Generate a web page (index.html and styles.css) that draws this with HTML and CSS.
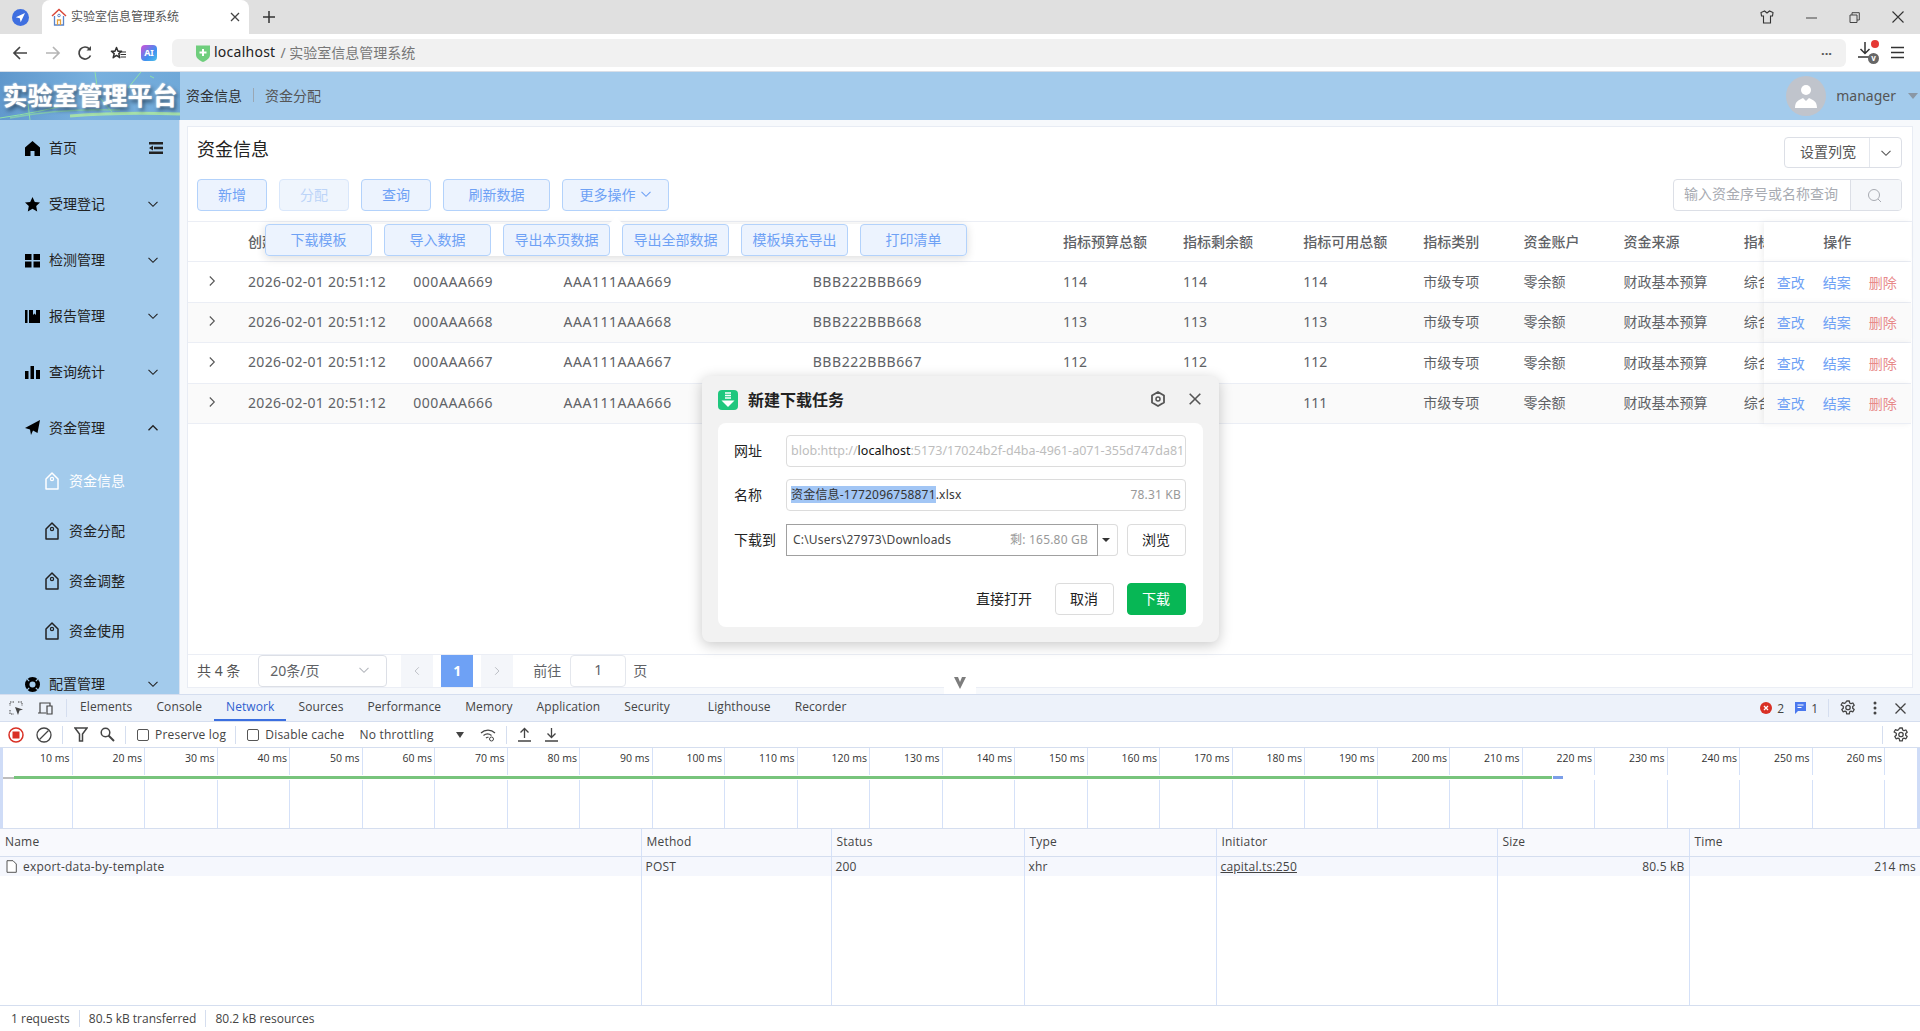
FILE: index.html
```html
<!DOCTYPE html>
<html lang="zh-CN">
<head>
    <meta charset="UTF-8">
    <title>实验室信息管理系统</title>
    <link rel="stylesheet" href="styles.css">
</head>
<body>
    <svg class="sprite" width="0" height="0">
        <symbol id="i-down" viewBox="0 0 12 12"><path d="M1.5 3.8 6 8.3l4.5-4.5" fill="none" stroke="currentColor" stroke-width="1.1"/></symbol>
        <symbol id="i-up" viewBox="0 0 12 12"><path d="M1.5 8.2 6 3.7l4.5 4.5" fill="none" stroke="currentColor" stroke-width="1.3"/></symbol>
        <symbol id="i-right" viewBox="0 0 12 12"><path d="M3.8 1.5 8.3 6l-4.5 4.5" fill="none" stroke="currentColor" stroke-width="1.1"/></symbol>
        <symbol id="i-tag" viewBox="0 0 14 18"><path d="M1 7 7 1l6 6v10H1z" fill="none" stroke="currentColor" stroke-width="1.5" stroke-linejoin="round"/><circle cx="7" cy="7" r="1.6" fill="none" stroke="currentColor" stroke-width="1.2"/></symbol>
        <symbol id="i-gear" viewBox="0 0 16 16"><path d="M6.700 1h2.600l.4 2 1.300.7 1.900-.7 1.300 2.300-1.500 1.300v1.600l1.500 1.300-1.300 2.300-1.900-.7-1.300.7-.4 2H6.700l-.4-2-1.300-.7-1.900.7-1.300-2.300 1.500-1.300V6.300L1.100 5l1.300-2.300 1.900.7L5.600 2.700z" fill="none" stroke="currentColor" stroke-width="1.300" stroke-linejoin="round"/><circle cx="8" cy="7.500" r="2.200" fill="none" stroke="currentColor" stroke-width="1.300"/></symbol>
    </svg>

    <!-- browser -->
    <div class="tabbar">
        <svg class="browser-logo" width="17" height="17" viewBox="0 0 17 17"><circle cx="8.500" cy="8.500" r="8.500" fill="#3f6fe0"/><path d="M13 4 3.800 8.300l4 .9.900 4z" fill="#fff"/></svg>
        <div class="tab">
            <svg width="16" height="18" viewBox="0 0 16 18"><path d="M1 8 8 1.500 15 8" fill="none" stroke="#d9483b" stroke-width="1.500"/><path d="M3.500 8v9h9V8" fill="none" stroke="#5a84c9" stroke-width="1.300"/><path d="M6.500 17v-5h3v5" fill="none" stroke="#eaa13a" stroke-width="1.300"/><circle cx="8" cy="7.500" r="1.300" fill="none" stroke="#5a84c9"/></svg>
            <span class="tab-title">实验室信息管理系统</span>
            <svg class="tab-close" width="10" height="10" viewBox="0 0 10 10"><path d="M1 1l8 8M9 1l-8 8" stroke="#444" stroke-width="1.300"/></svg>
        </div>
        <svg class="new-tab" width="14" height="14" viewBox="0 0 14 14"><path d="M7 1v12M1 7h12" stroke="#333" stroke-width="1.500"/></svg>
        <div class="window-btns">
            <svg width="14" height="14" viewBox="0 0 14 14"><path d="M4.500 1 1 2.500 1.500 6H3.500v7h7V6h2L13 2.500 9.500 1 7 3z" fill="none" stroke="#333" stroke-width="1.100"/></svg>
            <svg width="11" height="11" viewBox="0 0 11 11"><path d="M0 6h11" stroke="#444"/></svg>
            <svg width="11" height="11" viewBox="0 0 11 11"><path d="M1 3h7v7.500H1zM3 3V.700h7.300V8H8" fill="none" stroke="#444"/></svg>
            <svg width="12" height="12" viewBox="0 0 12 12"><path d="M.500.500l11 11M11.500.500l-11 11" stroke="#333" stroke-width="1.100"/></svg>
        </div>
    </div>
    <div class="addressbar">
        <svg class="nav-icon" width="16" height="16" viewBox="0 0 16 16"><path d="M15 8H2M8 2 2 8l6 6" fill="none" stroke="#444" stroke-width="1.700"/></svg>
        <svg class="nav-icon" width="16" height="16" viewBox="0 0 16 16"><path d="M1 8h13M8 2l6 6-6 6" fill="none" stroke="#b5b5b5" stroke-width="1.700"/></svg>
        <svg class="nav-icon" width="16" height="16" viewBox="0 0 16 16"><path d="M13.500 10.500A6 6 0 1 1 12.500 4" fill="none" stroke="#444" stroke-width="1.700"/><path d="M14 1v4.500H9.500z" fill="#444"/></svg>
        <svg class="nav-icon" width="16" height="16" viewBox="0 0 16 16"><path d="M6.500 2.500 8 6.200h3.600L8.800 8.600 9.800 12.700 6.500 10.400 3.200 12.700 4.200 8.600 1.400 6.200H5z" fill="none" stroke="#333" stroke-width="1.500" stroke-linejoin="round"/><path d="M11 7h5M10.500 9.500H16M11 12h5" stroke="#333" stroke-width="1.200"/></svg>
        <div class="ai-btn">AI</div>
        <div class="urlfield">
            <svg width="14" height="18" viewBox="0 0 14 18"><path d="M0 1.500h14V11c0 3-3.500 5.500-7 7-3.500-1.500-7-4-7-7z" fill="#6fce7d"/><path d="M7 5v7M3.500 8.500h7" stroke="#fff" stroke-width="2"/></svg>
            <span class="url-host">localhost</span>
            <span class="url-rest">/ 实验室信息管理系统</span>
            <span class="url-more">···</span>
        </div>
        <div class="download-btn">
            <svg width="22" height="24" viewBox="0 0 22 24"><path d="M8 1v11M3.500 8 8 12.500 12.500 8M1 16h13" fill="none" stroke="#333" stroke-width="1.500"/></svg>
            <span class="red-dot"></span>
            <span class="v-badge">v</span>
        </div>
        <svg class="menu-icon" width="13" height="13" viewBox="0 0 13 13"><path d="M0 1.500h13M0 6.500h13M0 11.500h13" stroke="#333" stroke-width="1.700"/></svg>
    </div>

    <!-- app -->
    <div class="app">
        <header class="app-header">
            <div class="logo">
                <svg class="logo-bg" width="180" height="48" viewBox="0 0 180 48"><path d="M95 0 97 14M141 0 128 16M100 26 112 40M0 46Q40 40 70 32M28 32 30 48M150 4l4 2" fill="none" stroke="#8fe0a8" stroke-width="1"/><path d="M70 44Q120 40 180 42" fill="none" stroke="#b6f09a" stroke-width="3" opacity=".75"/><path d="M10 46Q60 36 120 38" fill="none" stroke="#8fdca4" stroke-width="1.500" opacity=".7"/></svg>
                <span class="logo-text">实验室管理平台</span>
            </div>
            <nav class="topnav">
                <a class="topnav-on">资金信息</a>
                <i class="topnav-sep"></i>
                <a>资金分配</a>
            </nav>
            <div class="user">
                <div class="avatar">
                    <svg width="24" height="28" viewBox="0 0 24 28"><circle cx="12" cy="8" r="5" fill="#fff"/><path d="M1 26c0-7 4-8 8-10l3 3 3-3c4 2 8 3 8 10z" fill="#fff"/></svg>
                </div>
                <span class="user-name">manager</span>
                <i class="user-caret"></i>
            </div>
        </header>

        <div class="app-body">
            <aside class="sidebar">
                <div class="menu-item">
                    <svg class="menu-ico" width="15" height="15" viewBox="0 0 15 15"><path d="M7.500 0 15 6.500V15H9.500v-5h-4v5H0V6.500z"/></svg>
                    <span>首页</span>
                    <svg class="fold" width="14" height="12" viewBox="0 0 14 12"><path d="M0 0h14v2.500H0zM0 9.500h14V12H0zM5 4.800h9v2.400H5zM0 6l4-2.500v5z"/></svg>
                </div>
                <div class="menu-item">
                    <svg class="menu-ico" width="15" height="15" viewBox="0 0 15 15"><path d="M7.500 0l2.300 5 5.200.600-3.800 3.500 1 5.400-4.700-2.700-4.700 2.700 1-5.400L0 5.600 5.200 5z"/></svg>
                    <span>受理登记</span>
                    <svg class="chev"><use href="#i-down"/></svg>
                </div>
                <div class="menu-item">
                    <svg class="menu-ico" width="15" height="15" viewBox="0 0 15 15"><path d="M0 1h6.500v6H0zM8.500 1H15v6H8.500zM0 8.500h6.500v6H0zM8.500 8.500H15v6H8.500z"/></svg>
                    <span>检测管理</span>
                    <svg class="chev"><use href="#i-down"/></svg>
                </div>
                <div class="menu-item">
                    <svg class="menu-ico" width="15" height="15" viewBox="0 0 15 15"><path d="M0 1h2.500v13H0zM4 1h4v5l1.500-1.500L11 6V1h4v13H4z"/></svg>
                    <span>报告管理</span>
                    <svg class="chev"><use href="#i-down"/></svg>
                </div>
                <div class="menu-item">
                    <svg class="menu-ico" width="15" height="15" viewBox="0 0 15 15"><path d="M0 6h3.500v8H0zM5.500 1H9v13H5.500zM11 5h4v9h-4z"/></svg>
                    <span>查询统计</span>
                    <svg class="chev"><use href="#i-down"/></svg>
                </div>
                <div class="menu-item">
                    <svg class="menu-ico" width="15" height="16" viewBox="0 0 15 16"><path d="M15 0 12.500 13 8 10.500 6 15l-1-5.500L0 8z"/></svg>
                    <span>资金管理</span>
                    <svg class="chev"><use href="#i-up"/></svg>
                </div>
                <div class="submenu-item submenu-on"><svg width="14" height="18"><use href="#i-tag"/></svg><span>资金信息</span></div>
                <div class="submenu-item"><svg width="14" height="18"><use href="#i-tag"/></svg><span>资金分配</span></div>
                <div class="submenu-item"><svg width="14" height="18"><use href="#i-tag"/></svg><span>资金调整</span></div>
                <div class="submenu-item"><svg width="14" height="18"><use href="#i-tag"/></svg><span>资金使用</span></div>
                <div class="menu-item">
                    <svg class="menu-ico" width="15" height="15" viewBox="0 0 15 15"><circle cx="7.500" cy="7.500" r="7.500"/><circle cx="7.500" cy="7.500" r="3" fill="#a3cbec"/><path d="M2.200 2.200l2 2M12.800 2.200l-2 2M2.200 12.800l2-2M12.800 12.800l-2-2" stroke="#a3cbec" stroke-width="1.200"/></svg>
                    <span>配置管理</span>
                    <svg class="chev"><use href="#i-down"/></svg>
                </div>
            </aside>

            <main class="main">
                <div class="card">
                    <div class="card-top">
                        <h2 class="page-title">资金信息</h2>
                        <div class="split-btn">
                            <span class="split-text">设置列宽</span>
                            <span class="split-arrow"><svg width="12" height="12"><use href="#i-down"/></svg></span>
                        </div>
                    </div>
                    <div class="toolbar">
                        <button class="btn">新增</button>
                        <button class="btn btn-off">分配</button>
                        <button class="btn">查询</button>
                        <button class="btn btn-wide">刷新数据</button>
                        <button class="btn btn-wide">更多操作 <svg width="12" height="12"><use href="#i-down"/></svg></button>
                        <div class="search">
                            <span class="search-input">输入资金序号或名称查询</span>
                            <span class="search-btn">
                                <svg width="15" height="15" viewBox="0 0 15 15"><circle cx="7" cy="7" r="5.500" fill="none" stroke="#a8abb2"/><path d="M11 11l3 3" stroke="#a8abb2"/></svg>
                            </span>
                        </div>
                    </div>

                    <div class="table-area">
                        <table class="data-table">
                            <colgroup>
                                <col class="c-exp"><col class="c-date"><col class="c-seq"><col class="c-code"><col class="c-code2">
                                <col class="c-num"><col class="c-num"><col class="c-num"><col class="c-small"><col class="c-small"><col class="c-num"><col class="c-more"><col class="c-op">
                            </colgroup>
                            <thead>
                                <tr>
                                    <th></th><th>创建时间</th><th>资金序号</th><th>资金名称</th><th>资金编号</th>
                                    <th>指标预算总额</th><th>指标剩余额</th><th>指标可用总额</th><th>指标类别</th><th>资金账户</th><th>资金来源</th><th class="cut">指标名称</th>
                                    <th class="op-cell op-head">操作</th>
                                </tr>
                            </thead>
                            <tbody>
                                <tr>
                                    <td class="exp"><svg width="12" height="12"><use href="#i-right"/></svg></td>
                                    <td class="t-date">2026-02-01 20:51:12</td><td class="t-code">000AAA669</td><td class="t-code">AAA111AAA669</td><td class="t-code">BBB222BBB669</td>
                                    <td>114</td><td>114</td><td>114</td><td>市级专项</td><td>零余额</td><td>财政基本预算</td><td class="cut">综合业务</td>
                                    <td class="op-cell"><a class="link">查改</a><a class="link">结案</a><a class="link link-del">删除</a></td>
                                </tr>
                                <tr class="even">
                                    <td class="exp"><svg width="12" height="12"><use href="#i-right"/></svg></td>
                                    <td class="t-date">2026-02-01 20:51:12</td><td class="t-code">000AAA668</td><td class="t-code">AAA111AAA668</td><td class="t-code">BBB222BBB668</td>
                                    <td>113</td><td>113</td><td>113</td><td>市级专项</td><td>零余额</td><td>财政基本预算</td><td class="cut">综合业务</td>
                                    <td class="op-cell"><a class="link">查改</a><a class="link">结案</a><a class="link link-del">删除</a></td>
                                </tr>
                                <tr>
                                    <td class="exp"><svg width="12" height="12"><use href="#i-right"/></svg></td>
                                    <td class="t-date">2026-02-01 20:51:12</td><td class="t-code">000AAA667</td><td class="t-code">AAA111AAA667</td><td class="t-code">BBB222BBB667</td>
                                    <td>112</td><td>112</td><td>112</td><td>市级专项</td><td>零余额</td><td>财政基本预算</td><td class="cut">综合业务</td>
                                    <td class="op-cell"><a class="link">查改</a><a class="link">结案</a><a class="link link-del">删除</a></td>
                                </tr>
                                <tr class="even">
                                    <td class="exp"><svg width="12" height="12"><use href="#i-right"/></svg></td>
                                    <td class="t-date">2026-02-01 20:51:12</td><td class="t-code">000AAA666</td><td class="t-code">AAA111AAA666</td><td class="t-code">BBB222BBB666</td>
                                    <td>111</td><td>111</td><td>111</td><td>市级专项</td><td>零余额</td><td>财政基本预算</td><td class="cut">综合业务</td>
                                    <td class="op-cell"><a class="link">查改</a><a class="link">结案</a><a class="link link-del">删除</a></td>
                                </tr>
                            </tbody>
                        </table>
                        <div class="popover">
                            <i class="popover-arrow"></i>
                            <button class="btn btn-pop">下载模板</button>
                            <button class="btn btn-pop">导入数据</button>
                            <button class="btn btn-pop">导出本页数据</button>
                            <button class="btn btn-pop">导出全部数据</button>
                            <button class="btn btn-pop">模板填充导出</button>
                            <button class="btn btn-pop">打印清单</button>
                        </div>
                    </div>

                    <div class="pager">
                        <span class="pager-total">共 4 条</span>
                        <div class="pager-select">
                            <span>20条/页</span>
                            <svg width="12" height="12"><use href="#i-down"/></svg>
                        </div>
                        <span class="pager-btn"><svg width="10" height="12" viewBox="0 0 12 12"><path d="M8.200 1.500 3.700 6l4.500 4.500" fill="none" stroke="#b4b7bd"/></svg></span>
                        <span class="pager-btn pager-on">1</span>
                        <span class="pager-btn"><svg width="10" height="12"><use href="#i-right"/></svg></span>
                        <span class="pager-go">前往</span>
                        <span class="pager-input">1</span>
                        <span class="pager-unit">页</span>
                    </div>
                </div>
            </main>
        </div>
        <div class="collapse-handle">
            <svg width="12" height="12" viewBox="0 0 12 12"><path d="M0 0h4l2 5 2-5h4L6 12z" fill="#7d7d7d"/></svg>
        </div>
    </div>

    <!-- devtools -->
    <section class="devtools">
        <div class="dt-tabs">
            <svg class="dt-ico" width="15" height="15" viewBox="0 0 15 15"><path d="M5 1H1v4M1 9v4h4M9 1h4v4" fill="none" stroke="#444" stroke-dasharray="1.500 1"/><path d="M6 6l8 2.500-3.500 1L9 14z" fill="#444"/></svg>
            <svg class="dt-ico" width="16" height="15" viewBox="0 0 16 15"><path d="M1 12h8M3 12V2h10v3M10 5h5v8h-5z" fill="none" stroke="#444" stroke-width="1.200"/></svg>
            <i class="dt-sep"></i>
            <span class="dt-tab">Elements</span>
            <span class="dt-tab">Console</span>
            <span class="dt-tab dt-tab-on">Network</span>
            <span class="dt-tab">Sources</span>
            <span class="dt-tab">Performance</span>
            <span class="dt-tab">Memory</span>
            <span class="dt-tab">Application</span>
            <span class="dt-tab">Security</span>
            <span class="dt-tab dt-tab-gap">Lighthouse</span>
            <span class="dt-tab">Recorder</span>
            <div class="dt-right">
                <svg width="12" height="12" viewBox="0 0 12 12"><circle cx="6" cy="6" r="6" fill="#d93025"/><path d="M4 4l4 4M8 4 4 8" stroke="#fff" stroke-width="1.300"/></svg>
                <span class="dt-count">2</span>
                <svg class="dt-msg" width="11" height="12" viewBox="0 0 11 12"><path d="M0 0h11v9H3l-3 3z" fill="#4a78ee"/><path d="M2.500 3h6M2.500 5.500h4" stroke="#fff"/></svg>
                <span class="dt-count">1</span>
                <i class="dt-sep"></i>
                <svg class="dt-gear" width="16" height="16"><use href="#i-gear"/></svg>
                <svg class="dt-dots" width="4" height="14" viewBox="0 0 4 14"><circle cx="2" cy="2" r="1.500" fill="#444"/><circle cx="2" cy="7" r="1.500" fill="#444"/><circle cx="2" cy="12" r="1.500" fill="#444"/></svg>
                <svg class="dt-close" width="11" height="11" viewBox="0 0 11 11"><path d="M.500.500l10 10M10.500.500l-10 10" stroke="#444" stroke-width="1.300"/></svg>
            </div>
        </div>
        <div class="dt-bar">
            <svg class="bar-ico" width="16" height="16" viewBox="0 0 16 16"><circle cx="8" cy="8" r="7" fill="none" stroke="#d93025" stroke-width="1.500"/><rect x="4.500" y="4.500" width="7" height="7" fill="#d93025"/></svg>
            <svg class="bar-ico" width="16" height="16" viewBox="0 0 16 16"><circle cx="8" cy="8" r="7" fill="none" stroke="#444" stroke-width="1.300"/><path d="M3.500 12.500l9-9" stroke="#444" stroke-width="1.300"/></svg>
            <i class="bar-sep"></i>
            <svg class="bar-ico" width="14" height="15" viewBox="0 0 14 15"><path d="M1 1h12L8.500 7v7h-3V7z" fill="none" stroke="#444" stroke-width="1.500"/></svg>
            <svg class="bar-ico" width="15" height="15" viewBox="0 0 15 15"><circle cx="5.500" cy="5.500" r="4.300" fill="none" stroke="#444" stroke-width="1.500"/><path d="M8.500 8.500l5.500 5.500" stroke="#444" stroke-width="2"/></svg>
            <i class="bar-sep"></i>
            <label class="check"><i class="check-box"></i>Preserve log</label>
            <i class="bar-sep"></i>
            <label class="check"><i class="check-box"></i>Disable cache</label>
            <span class="throttle">No throttling</span>
            <i class="throttle-caret"></i>
            <svg class="bar-ico" width="16" height="14" viewBox="0 0 16 14"><path d="M1 5a10 10 0 0 1 14 0M3.500 7.500a6.500 6.500 0 0 1 8 0M6 10a3 3 0 0 1 2.500-.7" fill="none" stroke="#444" stroke-width="1.200"/><circle cx="11.500" cy="11" r="2" fill="none" stroke="#444"/></svg>
            <i class="bar-sep"></i>
            <svg class="bar-ico bar-ico-up" width="13" height="15" viewBox="0 0 13 15"><path d="M6.500 11V1.500M2.500 5.500l4-4 4 4M0 14h13" fill="none" stroke="#444" stroke-width="1.300"/></svg>
            <svg class="bar-ico" width="13" height="15" viewBox="0 0 13 15"><path d="M6.500 1v9.500M2.500 6.500l4 4 4-4M0 14h13" fill="none" stroke="#444" stroke-width="1.300"/></svg>
            <div class="bar-right">
                <i class="bar-sep"></i>
                <svg width="16" height="16"><use href="#i-gear"/></svg>
            </div>
        </div>
        <div class="overview" id="overview">
            <div class="ov-band" id="ov-band">
                <i class="ov-wait"></i>
                <i class="ov-green"></i>
                <i class="ov-blue"></i>
            </div>
            <i class="ov-handle"></i>
            <i class="ov-handle ov-handle-r"></i>
        </div>
        <table class="net-table">
            <colgroup>
                <col class="n-name"><col class="n-method"><col class="n-status"><col class="n-type"><col class="n-init"><col class="n-size"><col>
            </colgroup>
            <thead>
                <tr><th>Name</th><th>Method</th><th>Status</th><th>Type</th><th>Initiator</th><th>Size</th><th>Time</th></tr>
            </thead>
            <tbody>
                <tr class="net-row">
                    <td><svg class="file-ico" width="11" height="13" viewBox="0 0 11 13"><path d="M1 .700h6L10.300 4v8.300H1z" fill="#fff" stroke="#555"/></svg>export-data-by-template</td>
                    <td>POST</td><td>200</td><td>xhr</td><td><u>capital.ts:250</u></td><td class="num">80.5 kB</td><td class="num">214 ms</td>
                </tr>
                <tr class="net-fill"><td></td><td></td><td></td><td></td><td></td><td></td><td></td></tr>
            </tbody>
        </table>
        <footer class="dt-status">
            <span>1 requests</span>
            <span>80.5 kB transferred</span>
            <span>80.2 kB resources</span>
        </footer>
    </section>

    <!-- download dialog -->
    <div class="dialog">
        <div class="dialog-head">
            <svg width="20" height="20" viewBox="0 0 20 20"><rect width="20" height="20" rx="4" fill="#1fc77e"/><path d="M7 3h6M7 5.500h6M7 8h6" stroke="#fff" stroke-width="1.500"/><path d="M3.500 10.500h13L10 17z" fill="#fff"/></svg>
            <span class="dialog-title">新建下载任务</span>
            <svg class="dialog-gear" width="16" height="16" viewBox="0 0 16 16"><path d="M8 1l6 3.500v7L8 15l-6-3.500v-7z" fill="none" stroke="#555" stroke-width="1.800" stroke-linejoin="round"/><circle cx="8" cy="8" r="2" fill="none" stroke="#555" stroke-width="1.500"/></svg>
            <svg class="dialog-close" width="12" height="12" viewBox="0 0 12 12"><path d="M.700.700l10.600 10.600M11.300.700.700 11.300" stroke="#555" stroke-width="1.600"/></svg>
        </div>
        <div class="dialog-body">
            <div class="dl-row">
                <label>网址</label>
                <div class="dl-input dl-url"><span class="dl-gray">blob:http://</span>localhost<span class="dl-gray">:5173/17024b2f-d4ba-4961-a071-355d747da81</span></div>
            </div>
            <div class="dl-row">
                <label>名称</label>
                <div class="dl-input"><mark class="dl-sel">资金信息-1772096758871</mark>.xlsx<span class="dl-size">78.31 KB</span></div>
            </div>
            <div class="dl-row dl-row-path">
                <label>下载到</label>
                <div class="dl-path"><span>C:\Users\27973\Downloads</span><span class="dl-free">剩: 165.80 GB</span></div>
                <div class="dl-drop"><i></i></div>
                <button class="dl-btn">浏览</button>
            </div>
            <div class="dl-foot">
                <span class="dl-open">直接打开</span>
                <button class="dl-btn">取消</button>
                <button class="dl-btn dl-primary">下载</button>
            </div>
        </div>
    </div>

    <script>
        // overview ruler, 10 ms steps
        const overview = document.getElementById('overview');
        const band = document.getElementById('ov-band');
        for (let i = 1; i <= 27; i++) {
            const tick = document.createElement('div');
            tick.className = 'ov-tick';
            if (i <= 26) tick.textContent = `${i * 10} ms`;
            overview.insertBefore(tick, band);
        }
    </script>
</body>
</html>
```

FILE: styles.css
```css
* {
    margin: 0;
    padding: 0;
    box-sizing: border-box;
}

html, body {
    height: 100%;
    overflow: hidden;
}

body {
    display: flex;
    flex-direction: column;
    font-family: "Noto Sans", "Noto Sans CJK SC", sans-serif;
    font-size: 14px;
    color: #606266;
    background: #fff;
    position: relative;
}

.sprite {
    position: absolute;
}

i {
    font-style: normal;
}

/* browser */
.tabbar {
    height: 34px;
    flex: none;
    display: flex;
    align-items: center;
    background: #e0e0e0;
    padding-left: 12px;
}

.browser-logo {
    margin-right: 13px;
}

.tab {
    width: 207px;
    height: 34px;
    background: #fff;
    border-radius: 8px 8px 0 0;
    display: flex;
    align-items: center;
    padding-left: 9px;
    gap: 4px;
}

.tab-title {
    font-size: 12px;
    color: #555;
    flex: 1;
    padding-bottom: 2px;
}

.tab-close {
    margin-right: 9px;
}

.new-tab {
    margin-left: 13px;
}

.window-btns {
    margin-left: auto;
    display: flex;
    align-items: center;
    gap: 32px;
    padding-right: 16px;
}

.addressbar {
    height: 38px;
    flex: none;
    display: flex;
    align-items: center;
    background: #fff;
    border-bottom: 1px solid #d9dfe8;
    padding-left: 12px;
}

.nav-icon {
    margin-right: 16.500px;
}

.ai-btn {
    width: 16px;
    height: 16px;
    margin-left: -1px;
    border-radius: 4px;
    background: linear-gradient(135deg, #d250d8, #3f8ff0 60%, #4fc3e8);
    color: #fff;
    font-size: 9px;
    font-weight: 700;
    line-height: 16px;
    text-align: center;
}

.urlfield {
    margin-left: 15px;
    width: 1674px;
    height: 28px;
    background: #f1f1f1;
    border-radius: 6px;
    display: flex;
    align-items: center;
    padding: 0 14px 0 24px;
    gap: 4px;
}

.url-host {
    font-size: 14px;
    letter-spacing: .25px;
    color: #222;
    padding-bottom: 2px;
}

.url-rest {
    font-size: 14px;
    color: #777;
    padding-bottom: 2px;
    margin-left: 1px;
}

.url-more {
    margin-left: auto;
    color: #555;
    font-weight: 700;
    font-size: 13px;
}

.download-btn {
    position: relative;
    width: 22px;
    height: 24px;
    margin-left: 11px;
}

.red-dot {
    position: absolute;
    top: -1px;
    right: 0;
    width: 8px;
    height: 8px;
    border-radius: 50%;
    background: #e53935;
}

.v-badge {
    position: absolute;
    bottom: 1px;
    right: 0;
    width: 11px;
    height: 11px;
    border-radius: 50%;
    background: #666;
    color: #fff;
    font-size: 8px;
    font-weight: 700;
    line-height: 10px;
    text-align: center;
}

.menu-icon {
    margin-left: 12px;
}

/* app */
.app {
    height: 622px;
    flex: none;
    display: flex;
    flex-direction: column;
    position: relative;
    overflow: hidden;
    background: #edf1f9;
}

.app-header {
    height: 48px;
    flex: none;
    display: flex;
    align-items: center;
    background: #a3cbec;
}

.logo {
    width: 180px;
    height: 48px;
    position: relative;
    overflow: hidden;
    background: linear-gradient(100deg, #5f97cc, #78b0de 50%, #6fa8d8);
    display: flex;
    justify-content: center;
}

.logo-bg {
    position: absolute;
    left: 0;
    top: 0;
}

.logo-text {
    position: relative;
    color: #fff;
    font-size: 25px;
    font-weight: 700;
    line-height: 46px;
    white-space: nowrap;
    text-shadow: 0 0 2px #fff, 2px 3px 4px rgba(20, 40, 60, .75);
}

.topnav {
    display: flex;
    align-items: center;
    margin-left: 6px;
    gap: 11px;
    padding-bottom: 2px;
}

.topnav a {
    color: #555;
}

.topnav .topnav-on {
    color: #303133;
}

.topnav-sep {
    width: 1px;
    height: 14px;
    background: #9aa7b4;
}

.user {
    margin-left: auto;
    display: flex;
    align-items: center;
}

.avatar {
    width: 40px;
    height: 40px;
    border-radius: 50%;
    background: #c0c4cc;
    display: flex;
    align-items: center;
    justify-content: center;
    margin-right: 10px;
}

.user-name {
    color: #555;
    margin-right: 12px;
    padding-bottom: 2px;
}

.user-caret {
    width: 0;
    height: 0;
    border: 5px solid transparent;
    border-top: 6px solid #8a97a5;
    border-bottom: 0;
    margin-right: 2px;
}

.app-body {
    flex: 1;
    display: flex;
    min-height: 0;
}

.sidebar {
    width: 180px;
    flex: none;
    overflow: hidden;
    background: #a3cbec;
    border-right: 1px solid #dbe4f2;
    color: #222;
}

.menu-item {
    height: 56px;
    display: flex;
    align-items: center;
    padding-left: 25px;
}

.menu-item span,
.submenu-item span {
    padding-bottom: 2px;
}

.menu-ico {
    margin-right: 9px;
    fill: #000;
}

.chev {
    width: 12px;
    height: 12px;
    margin-left: auto;
    margin-right: 20px;
    color: #222;
}

.fold {
    margin-left: auto;
    margin-right: 16px;
    fill: #222;
}

.submenu-item {
    height: 50px;
    display: flex;
    align-items: center;
    padding-left: 45px;
    gap: 10px;
}

.submenu-on {
    color: #fff;
}

.main {
    flex: 1;
    min-width: 0;
    padding: 6px 7px 6px 7px;
    background: #f7f9fc;
}

.card {
    height: 100%;
    background: #fff;
    border: 1px solid #e8ecf4;
    border-bottom: 0;
    display: flex;
    flex-direction: column;
    position: relative;
}

.card-top {
    height: 52px;
    flex: none;
    display: flex;
    align-items: flex-start;
    justify-content: space-between;
    padding: 10px 10px 0 9px;
}

.page-title {
    font-size: 18px;
    font-weight: 400;
    color: #222;
    line-height: 24px;
}

.split-btn {
    height: 31px;
    width: 118px;
    display: flex;
    border: 1px solid #dcdfe6;
    border-radius: 4px;
    color: #555;
    line-height: 28px;
}

.split-text {
    flex: 1;
    text-align: center;
    border-right: 1px solid #e4e7ed;
    padding-left: 2px;
}

.split-arrow {
    width: 31px;
    display: flex;
    align-items: center;
    justify-content: center;
}

.toolbar {
    height: 43px;
    flex: none;
    display: flex;
    align-items: flex-start;
    gap: 12px;
    padding: 0 10px 0 9px;
    border-bottom: 1px solid #ebeef5;
}

.btn {
    height: 32px;
    width: 70px;
    border: 1px solid #b3d2fb;
    border-radius: 4px;
    background: #ecf3fe;
    color: #6ea1f5;
    font: inherit;
    display: inline-flex;
    align-items: center;
    justify-content: center;
    gap: 4px;
    padding-bottom: 2px;
}

.btn-wide {
    width: 107px;
}

.btn-off {
    background: #eff5fd;
    border-color: #d9e7fb;
    color: #bcd4f8;
}

.search {
    margin-left: auto;
    width: 229px;
    height: 32px;
    display: flex;
    border: 1px solid #dcdfe6;
    border-radius: 4px;
    overflow: hidden;
}

.search-input {
    flex: 1;
    color: #a8abb2;
    padding-left: 10px;
    line-height: 28px;
    white-space: nowrap;
}

.search-btn {
    width: 51px;
    background: #f5f7fa;
    border-left: 1px solid #dcdfe6;
    display: flex;
    align-items: center;
    justify-content: center;
    padding-right: 4px;
}

.table-area {
    flex: 1;
    position: relative;
    min-height: 0;
}

.data-table {
    table-layout: fixed;
    width: 1723px;
    border-collapse: separate;
    border-spacing: 0;
}

.c-exp { width: 48px; }
.c-date { width: 165px; }
.c-seq { width: 150px; }
.c-code { width: 249px; }
.c-code2 { width: 250px; }
.c-num { width: 120px; }
.c-small { width: 100px; }
.c-more { width: 32px; }
.c-op { width: 147px; }

.data-table th,
.data-table td {
    height: 40.4px;
    padding: 0 12px 2px;
    text-align: left;
    white-space: nowrap;
    overflow: hidden;
    border-bottom: 1px solid #ebeef5;
    background: #fff;
}

.data-table th {
    font-weight: 500;
    color: #606266;
}

.data-table .even td {
    background: #fafafa;
}

.data-table .cut {
    padding-right: 0;
}

.data-table .exp {
    padding-left: 18px;
    color: #555;
}

.exp svg {
    display: block;
}

.data-table .t-date {
    letter-spacing: .3px;
}

.data-table .t-code {
    letter-spacing: .55px;
}

.data-table .op-cell {
    position: relative;
    padding: 0 0 0 13px;
    box-shadow: -2px 0 6px rgba(0, 0, 0, .06);
}

.data-table .op-head {
    padding: 0 0 2px;
    text-align: center;
}

.link {
    color: #6ea1f5;
    margin-right: 18px;
}

.link-del {
    color: #e88a8a;
    margin-right: 0;
}

.popover {
    position: absolute;
    left: 77px;
    top: 2px;
    display: flex;
    gap: 12px;
    background: #fff;
    box-shadow: 0 2px 10px rgba(0, 0, 0, .14);
    border-radius: 4px;
}

.popover-arrow {
    position: absolute;
    left: 346px;
    top: -5px;
    width: 10px;
    height: 10px;
    background: #fff;
    transform: rotate(45deg);
}

.btn-pop {
    position: relative;
    width: 107px;
}

.pager {
    height: 34px;
    flex: none;
    display: flex;
    align-items: center;
    padding-left: 9px;
    border-top: 1px solid #ebeef5;
    border-bottom: 1px solid #ebeef5;
}

.pager-total {
    margin-right: 18px;
    color: #555;
    padding-bottom: 2px;
}

.pager-select {
    width: 129px;
    height: 32px;
    border: 1px solid #dcdfe6;
    border-radius: 4px;
    display: flex;
    align-items: center;
    justify-content: space-between;
    padding: 0 16px 2px 11px;
    color: #606266;
    margin-right: 14px;
}

.pager-select svg {
    color: #b4b7bd;
}

.pager-btn {
    width: 32px;
    height: 32px;
    margin-right: 8px;
    background: #f4f6fa;
    display: flex;
    align-items: center;
    justify-content: center;
    color: #b4b7bd;
}

.pager-on {
    background: #6ea1f5;
    color: #fff;
    font-weight: 700;
    font-size: 14px;
    padding-bottom: 2px;
}

.pager-go {
    margin-left: 12px;
    margin-right: 9px;
    padding-bottom: 2px;
}

.pager-input {
    width: 56px;
    height: 32px;
    border: 1px solid #e4e7ed;
    border-radius: 4px;
    text-align: center;
    line-height: 28px;
    margin-right: 7px;
}

.pager-unit {
    padding-bottom: 2px;
}

.collapse-handle {
    position: absolute;
    left: 944px;
    bottom: 0;
    width: 32px;
    height: 24px;
    background: #fff;
    border-radius: 16px 16px 0 0;
    display: flex;
    justify-content: center;
    padding-top: 7px;
}

/* devtools */
.devtools {
    flex: 1;
    min-height: 0;
    display: flex;
    flex-direction: column;
    font-family: "Open Sans", "Noto Sans", sans-serif;
    font-size: 12px;
    color: #444;
    background: #fff;
}

.dt-tabs {
    height: 28px;
    flex: none;
    display: flex;
    align-items: center;
    background: #edf2fa;
    border-top: 1px solid #d5deef;
    border-bottom: 1px solid #d5deef;
    padding-left: 9px;
}

.dt-ico {
    margin-right: 13px;
}

.dt-sep {
    width: 1px;
    height: 18px;
    background: #d5deef;
}

.dt-tab {
    height: 26px;
    line-height: 24px;
    padding: 0 12px;
    letter-spacing: .1px;
}

.dt-sep + .dt-tab {
    margin-left: 1px;
}

.dt-tab-on {
    color: #2f5fcf;
    border-bottom: 2px solid #3b6fe0;
}

.dt-tab-gap {
    margin-left: 14px;
}

.dt-right {
    margin-left: auto;
    display: flex;
    align-items: center;
    padding-right: 14px;
}

.dt-count {
    margin-left: 5px;
}

.dt-msg {
    margin-left: 11px;
}

.dt-right .dt-sep {
    margin: 0 11px 0 10px;
}

.dt-dots {
    margin-left: 17px;
}

.dt-close {
    margin-left: 18px;
}

.dt-bar {
    height: 26px;
    flex: none;
    display: flex;
    align-items: center;
    padding-left: 8px;
    border-bottom: 1px solid #d5deef;
    letter-spacing: .2px;
}

.bar-ico {
    margin-right: 12px;
}

.bar-ico-up {
    margin-right: 14px;
}

.bar-sep {
    width: 1px;
    height: 18px;
    background: #d5deef;
    margin: 0 11px 0 -2px;
}

.check {
    display: flex;
    align-items: center;
    gap: 6px;
    margin-right: 11px;
}

.check-box {
    width: 12px;
    height: 12px;
    border: 1px solid #555;
    border-radius: 2px;
}

.throttle {
    margin-left: 4px;
}

.throttle-caret {
    width: 0;
    height: 0;
    border: 4px solid transparent;
    border-top: 6px solid #444;
    border-bottom: 0;
    margin-left: 22px;
    margin-right: 16px;
}

.bar-right {
    margin-left: auto;
    display: flex;
    align-items: center;
    padding-right: 11px;
}

.bar-right .bar-sep {
    margin: 0 10px 0 0;
}

.overview {
    height: 81px;
    flex: none;
    display: flex;
    position: relative;
    overflow: hidden;
    border-bottom: 1px solid #d5deef;
}

.ov-tick {
    width: 72.500px;
    flex: none;
    border-right: 1px solid #d5e1f8;
    text-align: right;
    padding: 2px 2px 0 0;
    font-size: 10.500px;
    line-height: 16px;
    color: #333;
}

.ov-band {
    position: absolute;
    left: 0;
    right: 0;
    top: 27px;
    height: 5px;
    background: #fff;
    display: flex;
    align-items: center;
    padding-left: 3px;
}

.ov-wait {
    width: 11px;
    height: 2px;
    background: #bdbdbd;
}

.ov-green {
    width: 1538px;
    height: 3px;
    background: #78c47c;
}

.ov-blue {
    width: 10px;
    height: 3px;
    margin-left: 1px;
    background: #7b9ee8;
}

.ov-handle {
    position: absolute;
    left: 0;
    top: 0;
    width: 3px;
    height: 81px;
    background: #cfdcf7;
}

.ov-handle-r {
    left: auto;
    right: 0;
}

.net-table {
    height: 176px;
    width: 100%;
    flex: none;
    table-layout: fixed;
    border-collapse: collapse;
    letter-spacing: .2px;
}

.n-name { width: 641px; }
.n-method { width: 190px; }
.n-status { width: 193px; }
.n-type { width: 192px; }
.n-init { width: 281px; }
.n-size { width: 192px; }

.net-table th {
    height: 27px;
    font-weight: 400;
    text-align: left;
    padding: 0 0 2px 5px;
    background: #f8f9fd;
    border-right: 1px solid #d5e1f8;
    border-bottom: 1px solid #d5deef;
}

.net-row td {
    height: 20px;
    padding: 0 4px;
    background: #f5f7fd;
    border-right: 1px solid #d5e1f8;
    white-space: nowrap;
    vertical-align: middle;
}

.net-row .num {
    text-align: right;
}

.file-ico {
    vertical-align: -2px;
    margin: 0 6px 0 2px;
}

.net-fill td {
    border-right: 1px solid #d5e1f8;
}

.net-table th:last-child,
.net-table td:last-child {
    border-right: 0;
}

.dt-status {
    flex: 1;
    display: flex;
    align-items: center;
    border-top: 1px solid #d5deef;
    padding-left: 11px;
}

.dt-status span {
    padding-right: 9px;
    margin-right: 9px;
    border-right: 1px solid #d5deef;
}

.dt-status span:last-child {
    border-right: 0;
}

/* download dialog */
.dialog {
    position: absolute;
    left: 702px;
    top: 376px;
    width: 517px;
    height: 266px;
    background: #f2f2f2;
    border-radius: 8px;
    box-shadow: 0 3px 14px rgba(0, 0, 0, .22);
    padding: 0 16px;
    display: flex;
    flex-direction: column;
    color: #222;
}

.dialog-head {
    height: 47px;
    flex: none;
    display: flex;
    align-items: center;
}

.dialog-title {
    margin-left: 10px;
    font-size: 16px;
    font-weight: 700;
    padding-bottom: 2px;
}

.dialog-gear {
    margin-left: auto;
    margin-right: 23px;
    margin-bottom: 2px;
}

.dialog-close {
    margin-right: 2px;
    margin-bottom: 2px;
}

.dialog-body {
    height: 204px;
    background: #fff;
    border-radius: 8px;
    padding: 12px 17px 12px 16px;
}

.dl-row {
    height: 32px;
    display: flex;
    align-items: center;
    margin-bottom: 12px;
}

.dl-row label {
    width: 52px;
    flex: none;
    font-size: 14px;
    padding-bottom: 2px;
}

.dl-input {
    flex: 1;
    height: 32px;
    min-width: 0;
    border: 1px solid #dcdcdc;
    border-radius: 4px;
    font-size: 12px;
    letter-spacing: .2px;
    line-height: 30px;
    padding: 0 4px;
    display: flex;
    white-space: nowrap;
    overflow: hidden;
    color: #333;
}

.dl-input.dl-url {
    color: #111;
    font-size: 12.500px;
    letter-spacing: 0;
}

.dl-gray {
    color: #bdbdbd;
}

.dl-sel {
    background: #a2c6f5;
    color: #333;
    height: 17px;
    line-height: 17px;
    margin-top: 6px;
}

.dl-size {
    margin-left: auto;
    font-size: 12px;
    color: #999;
}

.dl-row-path {
    margin-top: 13px;
}

.dl-path {
    width: 312px;
    height: 32px;
    border: 1px solid #a0a0a0;
    font-size: 12px;
    letter-spacing: .2px;
    line-height: 30px;
    padding: 0 9px 0 6px;
    display: flex;
    justify-content: space-between;
    color: #444;
}

.dl-free {
    color: #999;
}

.dl-drop {
    width: 20px;
    height: 32px;
    border: 1px solid #dcdcdc;
    border-left: 0;
    border-radius: 0 4px 4px 0;
    display: flex;
    align-items: center;
    justify-content: center;
    padding-right: 3px;
    margin-right: 9px;
}

.dl-drop i {
    width: 0;
    height: 0;
    border: 4px solid transparent;
    border-top: 4px solid #333;
    border-bottom: 0;
}

.dl-btn {
    width: 59px;
    height: 32px;
    border: 1px solid #dcdcdc;
    border-radius: 4px;
    background: #fff;
    color: #222;
    font: inherit;
    padding: 0 1px 2px 0;
}

.dl-foot {
    display: flex;
    align-items: center;
    justify-content: flex-end;
    gap: 13px;
    margin-top: 27px;
}

.dl-open {
    margin-right: 10px;
    padding-bottom: 2px;
}

.dl-primary {
    background: #07b755;
    border-color: #07b755;
    color: #fff;
}
```
